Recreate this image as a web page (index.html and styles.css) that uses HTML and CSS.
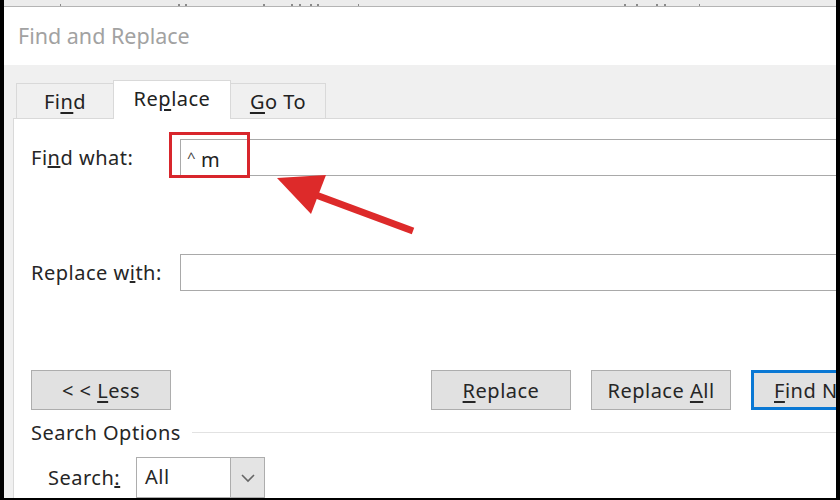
FILE: index.html
```html
<!DOCTYPE html>
<html lang="en">
<head>
    <meta charset="UTF-8">
    <meta name="viewport" content="width=device-width, initial-scale=1.0">
    <title>Find and Replace</title>
    <link rel="stylesheet" href="styles.css">
</head>
<body>
    <div class="screen">
        <!-- document ruler peeking out above the dialog -->
        <svg class="ruler" width="832" height="8" viewBox="0 0 832 8">
            <rect x="0" y="0" width="832" height="7" fill="#ececec"/>
            <rect x="0" y="6" width="832" height="1" fill="#b4b4b4"/>
            <g fill="#8a8a8a">
                <rect x="56" y="4" width="1" height="2"/>
                <rect x="174" y="4" width="2" height="2"/>
                <rect x="181" y="4" width="2" height="2"/>
                <rect x="259" y="4" width="2" height="2"/>
                <rect x="287" y="4" width="2" height="2"/>
                <rect x="295" y="4" width="2" height="2"/>
                <rect x="306" y="4" width="2" height="2"/>
                <rect x="313" y="4" width="2" height="2"/>
                <rect x="354" y="4" width="1" height="2"/>
                <rect x="620" y="4" width="2" height="2"/>
                <rect x="632" y="4" width="2" height="2"/>
                <rect x="652" y="4" width="2" height="2"/>
                <rect x="660" y="4" width="2" height="2"/>
                <rect x="695" y="4" width="1" height="2"/>
            </g>
        </svg>

        <div class="titlebar">Find and Replace</div>

        <div class="dialog">
            <div class="tabs">
                <div class="tab">Fi<u>n</u>d</div>
                <div class="tab active">Re<u>p</u>lace</div>
                <div class="tab"><u>G</u>o To</div>
            </div>

            <div class="panel">
                <div class="field-row find-row">
                    <label class="field-label">Fi<u>n</u>d what:</label>
                    <div class="field-wrap">
                        <div class="text-field"><span class="caret">^</span>m</div>
                        <div class="highlight-box"></div>
                    </div>
                </div>

                <div class="field-row replace-row">
                    <label class="field-label">Replace w<u>i</u>th:</label>
                    <div class="field-wrap">
                        <div class="text-field"></div>
                    </div>
                </div>

                <div class="button-row">
                    <button class="btn">&lt; &lt; <u>L</u>ess</button>
                    <button class="btn btn-replace"><u>R</u>eplace</button>
                    <button class="btn">Replace <u>A</u>ll</button>
                    <button class="btn btn-default"><u>F</u>ind Next</button>
                </div>

                <div class="options-heading">
                    <span>Search Options</span>
                    <div class="options-rule"></div>
                </div>

                <div class="search-row">
                    <label class="search-label">Search<u>:</u></label>
                    <div class="select">
                        <span class="select-value">All</span>
                        <span class="select-button">
                            <svg width="16" height="10" viewBox="0 0 16 10">
                                <path d="M2 2 L8 8 L14 2" fill="none" stroke="#666" stroke-width="1.6"/>
                            </svg>
                        </span>
                    </div>
                </div>
            </div>
        </div>

        <!-- callout arrow pointing at the search text -->
        <svg class="callout" width="840" height="500" viewBox="0 0 840 500">
            <line x1="316" y1="195" x2="413" y2="231" stroke="#dd2a2a" stroke-width="7"/>
            <polygon points="277,178 326,175 311,214" fill="#dd2a2a"/>
        </svg>
    </div>
</body>
</html>
```

FILE: styles.css
```css
body {
    margin: 0;
    width: 840px;
    height: 500px;
    background-color: #000;
    overflow: hidden;
    font-family: "Noto Sans", "Open Sans", sans-serif;
    color: #262626;
}

.screen {
    position: relative;
    margin-left: 4px;
    width: 832px;
    height: 498px;
    background-color: #fff;
    overflow: hidden;
}

.ruler {
    display: block;
}

.titlebar {
    height: 57px;
    padding-left: 14px;
    font-size: 21.5px;
    line-height: 56px;
    color: #a2a2a2;
    box-sizing: border-box;
}

.dialog {
    background-color: #f0f0f0;
    padding-left: 9px;
    height: 433px;
    display: flex;
    flex-direction: column;
    font-size: 20px;
    letter-spacing: 0.5px;
}

/* tab strip */
.tabs {
    height: 53px;
    display: flex;
    align-items: flex-end;
    padding-left: 3px;
}

.tab {
    height: 35px;
    box-sizing: border-box;
    border: 1px solid #d9d9d9;
    border-bottom: none;
    margin-right: -1px;
    display: flex;
    align-items: center;
    justify-content: center;
    color: #222;
}

.tab:nth-child(1) { width: 98px; }
.tab:nth-child(2) { width: 118px; }
.tab:nth-child(3) { width: 96px; }

.tab.active {
    height: 39px;
    background-color: #fff;
    position: relative;
    z-index: 1;
    margin-bottom: -1px;
    padding-bottom: 3px;
}

.tab u {
    text-underline-offset: 3px;
}

/* tab page */
.panel {
    flex: 1;
    background-color: #fff;
    border-top: 1px solid #d9d9d9;
    border-left: 1px solid #d9d9d9;
    padding-left: 17px;
    overflow: hidden;
}

.field-row {
    display: flex;
    align-items: center;
}

.find-row {
    margin-top: 20px;
}

.replace-row {
    margin-top: 78px;
}

.field-label {
    width: 149px;
    flex-shrink: 0;
}

.field-wrap {
    position: relative;
    flex: 1;
    margin-right: -30px;
}

.text-field {
    height: 37px;
    box-sizing: border-box;
    border: 1px solid #a9a9a9;
    padding-left: 6px;
    line-height: 34px;
    color: #222;
}

.caret {
    font-size: 15px;
    vertical-align: 4px;
    margin-right: 5px;
    color: #444;
}

.highlight-box {
    position: absolute;
    left: -11px;
    top: -7px;
    width: 81px;
    height: 46px;
    box-sizing: border-box;
    border: 3px solid #d8262c;
}

/* command buttons */
.button-row {
    margin-top: 79px;
    display: flex;
    gap: 20px;
}

.btn {
    width: 140px;
    height: 40px;
    flex-shrink: 0;
    background-color: #e1e1e1;
    border: 1px solid #adadad;
    font-family: inherit;
    font-size: inherit;
    letter-spacing: inherit;
    color: #262626;
    padding: 0;
    white-space: nowrap;
}

.btn u {
    text-underline-offset: 3px;
}

.btn-replace {
    margin-left: 240px;
}

.btn-default {
    border: 3px solid #0a78d4;
    text-align: left;
    padding-left: 20px;
}

/* search options */
.options-heading {
    margin-top: 11px;
    height: 22px;
    display: flex;
    align-items: center;
}

.options-rule {
    flex: 1;
    height: 1px;
    background-color: #e2e2e2;
    margin-left: 11px;
}

.search-row {
    margin-top: 14px;
    padding-left: 17px;
    display: flex;
    align-items: center;
}

.search-label {
    width: 88px;
}

.select {
    width: 129px;
    height: 41px;
    box-sizing: border-box;
    border: 1px solid #adadad;
    display: flex;
}

.select-value {
    flex: 1;
    padding-left: 8px;
    line-height: 38px;
}

.select-button {
    width: 33px;
    background-color: #e4e4e4;
    border-left: 1px solid #adadad;
    display: flex;
    align-items: center;
    justify-content: center;
}

.callout {
    position: absolute;
    left: -4px;
    top: 0;
    pointer-events: none;
}
```
